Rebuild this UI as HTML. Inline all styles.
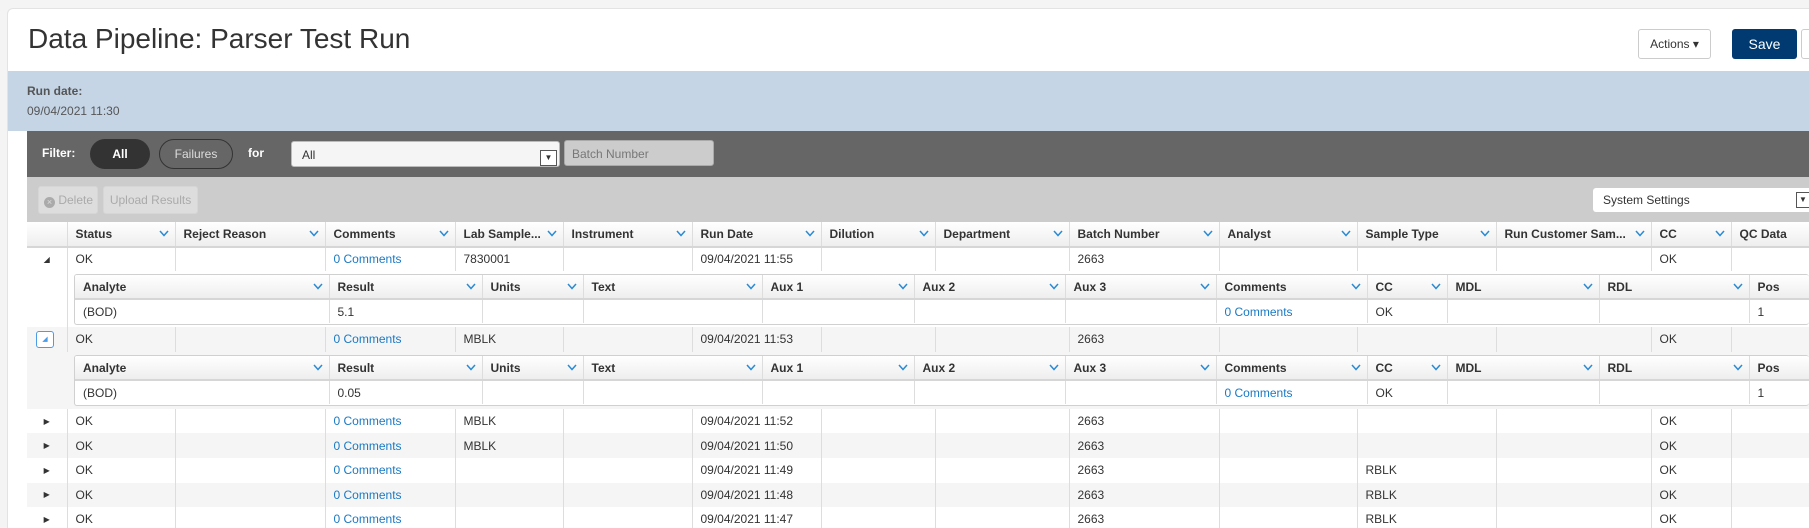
<!DOCTYPE html>
<html style="width:1809px;height:528px;overflow:hidden"><head><meta charset="utf-8"><style>
*{box-sizing:border-box;margin:0;padding:0}
body{width:1809px;height:528px;overflow:hidden;background:#f4f4f4;font-family:"Liberation Sans",Arial,sans-serif;font-size:12px;color:#333;position:relative}
.card{position:absolute;left:7px;top:8px;width:1802px;height:520px;background:#fff;border:1px solid #e3e3e3;border-bottom:none;border-right:none;border-radius:6px 0 0 0}
.abs{position:absolute}
.title{left:28px;top:23px;font-size:28px;color:#333}
.blue{left:8px;top:71px;width:1801px;height:60px;background:#c5d5e6}
.dark{left:27px;top:131px;width:1782px;height:46px;background:#666}
.gray{left:27px;top:177px;width:1782px;height:46px;background:#ccc}
.pill{border-radius:15px;height:30px;top:139px;text-align:center;line-height:30px;font-size:12px}
.tbl{position:absolute;border-collapse:collapse;table-layout:fixed}
.tbl td{height:24.6px;padding:0 8px;border-left:1px solid #ddd;white-space:nowrap;overflow:hidden;vertical-align:middle;position:relative}
.tbl tr.h td{font-weight:bold;background:linear-gradient(#fff,#eee);border-bottom:2px solid #d6d6d6;color:#333}
.tbl tr.g td{background:#f5f5f5}
.chev{position:absolute;right:6px;top:8px}
a{color:#1a7ac4;text-decoration:none}
.nest{position:absolute;left:74px;border:1px solid #d0d0d0;border-radius:3px;background:#fff;overflow:hidden;width:1735px;height:51px;border-right:none}
.nest table{position:static}
.nest td{height:24px}
.nest tr.h td{border-bottom:2px solid #d6d6d6}
.wrap{position:absolute;left:0;top:0;width:1809px;height:528px;overflow:hidden}
</style></head><body><div class="wrap">
<svg width="0" height="0" style="position:absolute"><defs><symbol id="c" viewBox="0 0 10 7"><polyline points="1,1 5,5.5 9,1" fill="none" stroke="#2a8ad4" stroke-width="1.5"/></symbol></defs></svg>
<div class="card"></div>
<div class="abs title">Data Pipeline: Parser Test Run</div>
<div class="abs" style="left:1638px;top:29px;width:73px;height:30px;border:1px solid #ccc;border-radius:3px;background:#fff;text-align:center;line-height:28px;font-size:12px">Actions ▾</div>
<div class="abs" style="left:1732px;top:29px;width:65px;height:30px;border-radius:3px;background:#003a70;color:#fff;text-align:center;line-height:30px;font-size:14px">Save</div>
<div class="abs" style="left:1801px;top:29px;width:20px;height:30px;border:1px solid #ccc;border-radius:3px;background:#fff"></div>
<div class="abs blue"></div>
<div class="abs" style="left:27px;top:84px;font-weight:bold;color:#555">Run date:</div>
<div class="abs" style="left:27px;top:104px;color:#555">09/04/2021 11:30</div>
<div class="abs dark"></div>
<div class="abs" style="left:8px;top:131px;width:19px;height:397px;background:#fff"></div>
<div class="abs" style="left:42px;top:146px;color:#fff;font-weight:bold">Filter:</div>
<div class="abs pill" style="left:90px;width:60px;background:#333;color:#fff;font-weight:bold">All</div>
<div class="abs pill" style="left:159px;width:74px;border:1px solid #333;color:#ddd;line-height:28px">Failures</div>
<div class="abs" style="left:248px;top:146px;color:#fff;font-weight:bold">for</div>
<div class="abs" style="left:291px;top:141px;width:269px;height:26px;background:#f5f5f5;border:1px solid #bbb;border-radius:3px;padding:6px 10px">All</div>
<div class="abs" style="left:540px;top:150px;width:17px;height:16px;border:1px solid #555;background:#fff;font-size:8px;text-align:center;line-height:14px">▼</div>
<div class="abs" style="left:564px;top:140px;width:150px;height:26px;background:#ccc;border:1px solid #aaa;border-radius:3px;padding:6px 7px;color:#777">Batch Number</div>
<div class="abs gray"></div>
<div class="abs" style="left:38px;top:186px;width:60px;height:28px;background:#ddd;border:1px solid #d6d6d6;border-radius:3px;color:#aaa;line-height:26px;padding-left:5px"><span style="display:inline-block;width:11px;height:11px;border-radius:50%;background:#aaa;color:#ddd;font-size:9px;line-height:11px;text-align:center;vertical-align:-1px">×</span> Delete</div>
<div class="abs" style="left:103px;top:186px;width:95px;height:28px;background:#ddd;border:1px solid #d6d6d6;border-radius:3px;color:#aaa;line-height:26px;text-align:center">Upload Results</div>
<div class="abs" style="left:1593px;top:188px;width:216px;height:24px;background:#fff;border-radius:3px 0 0 3px;padding:5px 10px;font-size:12px">System Settings</div>
<div class="abs" style="left:1796px;top:192px;width:13px;height:16px;border:1px solid #555;border-right:none;background:#fff;font-size:8px;text-align:center;line-height:14px">▼</div>

<table class="tbl" style="left:27px;top:222px;width:1791px">
<colgroup><col style="width:40px"><col style="width:108px"><col style="width:150px"><col style="width:130px"><col style="width:108px"><col style="width:129px"><col style="width:129px"><col style="width:114px"><col style="width:134px"><col style="width:150px"><col style="width:138px"><col style="width:139px"><col style="width:155px"><col style="width:80px"><col style="width:187px"></colgroup>
<tr class="h"><td style="border-left:none"></td><td>Status<svg class="chev" width="10" height="7"><use href="#c"/></svg></td><td>Reject Reason<svg class="chev" width="10" height="7"><use href="#c"/></svg></td><td>Comments<svg class="chev" width="10" height="7"><use href="#c"/></svg></td><td>Lab Sample...<svg class="chev" width="10" height="7"><use href="#c"/></svg></td><td>Instrument<svg class="chev" width="10" height="7"><use href="#c"/></svg></td><td>Run Date<svg class="chev" width="10" height="7"><use href="#c"/></svg></td><td>Dilution<svg class="chev" width="10" height="7"><use href="#c"/></svg></td><td>Department<svg class="chev" width="10" height="7"><use href="#c"/></svg></td><td>Batch Number<svg class="chev" width="10" height="7"><use href="#c"/></svg></td><td>Analyst<svg class="chev" width="10" height="7"><use href="#c"/></svg></td><td>Sample Type<svg class="chev" width="10" height="7"><use href="#c"/></svg></td><td>Run Customer Sam...<svg class="chev" width="10" height="7"><use href="#c"/></svg></td><td>CC<svg class="chev" width="10" height="7"><use href="#c"/></svg></td><td>QC Data</td></tr>
<tr><td style="border-left:none;font-size:8px;text-align:center">◢</td><td>OK</td><td></td><td><a>0 Comments</a></td><td>7830001</td><td></td><td>09/04/2021 11:55</td><td></td><td></td><td>2663</td><td></td><td></td><td></td><td>OK</td><td></td></tr>
<tr><td style="border-left:none;height:56px"></td><td colspan="14" style="border-left:1px solid #ddd"></td></tr>
<tr class="g"><td style="border-left:none"><div style="position:absolute;left:9px;top:4px;width:18px;height:17px;border:1px solid #4a9be8;border-radius:3px;background:#fff;font-size:7px;color:#4a9be8;text-align:center;line-height:15px">◢</div></td><td>OK</td><td></td><td><a>0 Comments</a></td><td>MBLK</td><td></td><td>09/04/2021 11:53</td><td></td><td></td><td>2663</td><td></td><td></td><td></td><td>OK</td><td></td></tr>
<tr class="g"><td style="border-left:none;height:57px"></td><td colspan="14" style="border-left:none"></td></tr>
<tr><td style="border-left:none;font-size:8px;text-align:center">▶</td><td>OK</td><td></td><td><a>0 Comments</a></td><td>MBLK</td><td></td><td>09/04/2021 11:52</td><td></td><td></td><td>2663</td><td></td><td></td><td></td><td>OK</td><td></td></tr>
<tr class="g"><td style="border-left:none;font-size:8px;text-align:center">▶</td><td>OK</td><td></td><td><a>0 Comments</a></td><td>MBLK</td><td></td><td>09/04/2021 11:50</td><td></td><td></td><td>2663</td><td></td><td></td><td></td><td>OK</td><td></td></tr>
<tr><td style="border-left:none;font-size:8px;text-align:center">▶</td><td>OK</td><td></td><td><a>0 Comments</a></td><td></td><td></td><td>09/04/2021 11:49</td><td></td><td></td><td>2663</td><td></td><td>RBLK</td><td></td><td>OK</td><td></td></tr>
<tr class="g"><td style="border-left:none;font-size:8px;text-align:center">▶</td><td>OK</td><td></td><td><a>0 Comments</a></td><td></td><td></td><td>09/04/2021 11:48</td><td></td><td></td><td>2663</td><td></td><td>RBLK</td><td></td><td>OK</td><td></td></tr>
<tr><td style="border-left:none;font-size:8px;text-align:center">▶</td><td>OK</td><td></td><td><a>0 Comments</a></td><td></td><td></td><td>09/04/2021 11:47</td><td></td><td></td><td>2663</td><td></td><td>RBLK</td><td></td><td>OK</td><td></td></tr>
</table>

<div class="nest" style="top:274px">
<table class="tbl" style="width:1750px">
<colgroup><col style="width:254px"><col style="width:153px"><col style="width:101px"><col style="width:179px"><col style="width:152px"><col style="width:151px"><col style="width:151px"><col style="width:151px"><col style="width:80px"><col style="width:152px"><col style="width:150px"><col style="width:76px"></colgroup>
<tr class="h"><td style="border-left:none">Analyte<svg class="chev" width="10" height="7"><use href="#c"/></svg></td><td>Result<svg class="chev" width="10" height="7"><use href="#c"/></svg></td><td>Units<svg class="chev" width="10" height="7"><use href="#c"/></svg></td><td>Text<svg class="chev" width="10" height="7"><use href="#c"/></svg></td><td>Aux 1<svg class="chev" width="10" height="7"><use href="#c"/></svg></td><td>Aux 2<svg class="chev" width="10" height="7"><use href="#c"/></svg></td><td>Aux 3<svg class="chev" width="10" height="7"><use href="#c"/></svg></td><td>Comments<svg class="chev" width="10" height="7"><use href="#c"/></svg></td><td>CC<svg class="chev" width="10" height="7"><use href="#c"/></svg></td><td>MDL<svg class="chev" width="10" height="7"><use href="#c"/></svg></td><td>RDL<svg class="chev" width="10" height="7"><use href="#c"/></svg></td><td>Pos</td></tr>
<tr><td style="border-left:none">(BOD)</td><td>5.1</td><td></td><td></td><td></td><td></td><td></td><td><a>0 Comments</a></td><td>OK</td><td></td><td></td><td>1</td></tr>
</table></div>

<div class="nest" style="top:355px">
<table class="tbl" style="width:1750px">
<colgroup><col style="width:254px"><col style="width:153px"><col style="width:101px"><col style="width:179px"><col style="width:152px"><col style="width:151px"><col style="width:151px"><col style="width:151px"><col style="width:80px"><col style="width:152px"><col style="width:150px"><col style="width:76px"></colgroup>
<tr class="h"><td style="border-left:none">Analyte<svg class="chev" width="10" height="7"><use href="#c"/></svg></td><td>Result<svg class="chev" width="10" height="7"><use href="#c"/></svg></td><td>Units<svg class="chev" width="10" height="7"><use href="#c"/></svg></td><td>Text<svg class="chev" width="10" height="7"><use href="#c"/></svg></td><td>Aux 1<svg class="chev" width="10" height="7"><use href="#c"/></svg></td><td>Aux 2<svg class="chev" width="10" height="7"><use href="#c"/></svg></td><td>Aux 3<svg class="chev" width="10" height="7"><use href="#c"/></svg></td><td>Comments<svg class="chev" width="10" height="7"><use href="#c"/></svg></td><td>CC<svg class="chev" width="10" height="7"><use href="#c"/></svg></td><td>MDL<svg class="chev" width="10" height="7"><use href="#c"/></svg></td><td>RDL<svg class="chev" width="10" height="7"><use href="#c"/></svg></td><td>Pos</td></tr>
<tr><td style="border-left:none">(BOD)</td><td>0.05</td><td></td><td></td><td></td><td></td><td></td><td><a>0 Comments</a></td><td>OK</td><td></td><td></td><td>1</td></tr>
</table></div>
</div></body></html>
